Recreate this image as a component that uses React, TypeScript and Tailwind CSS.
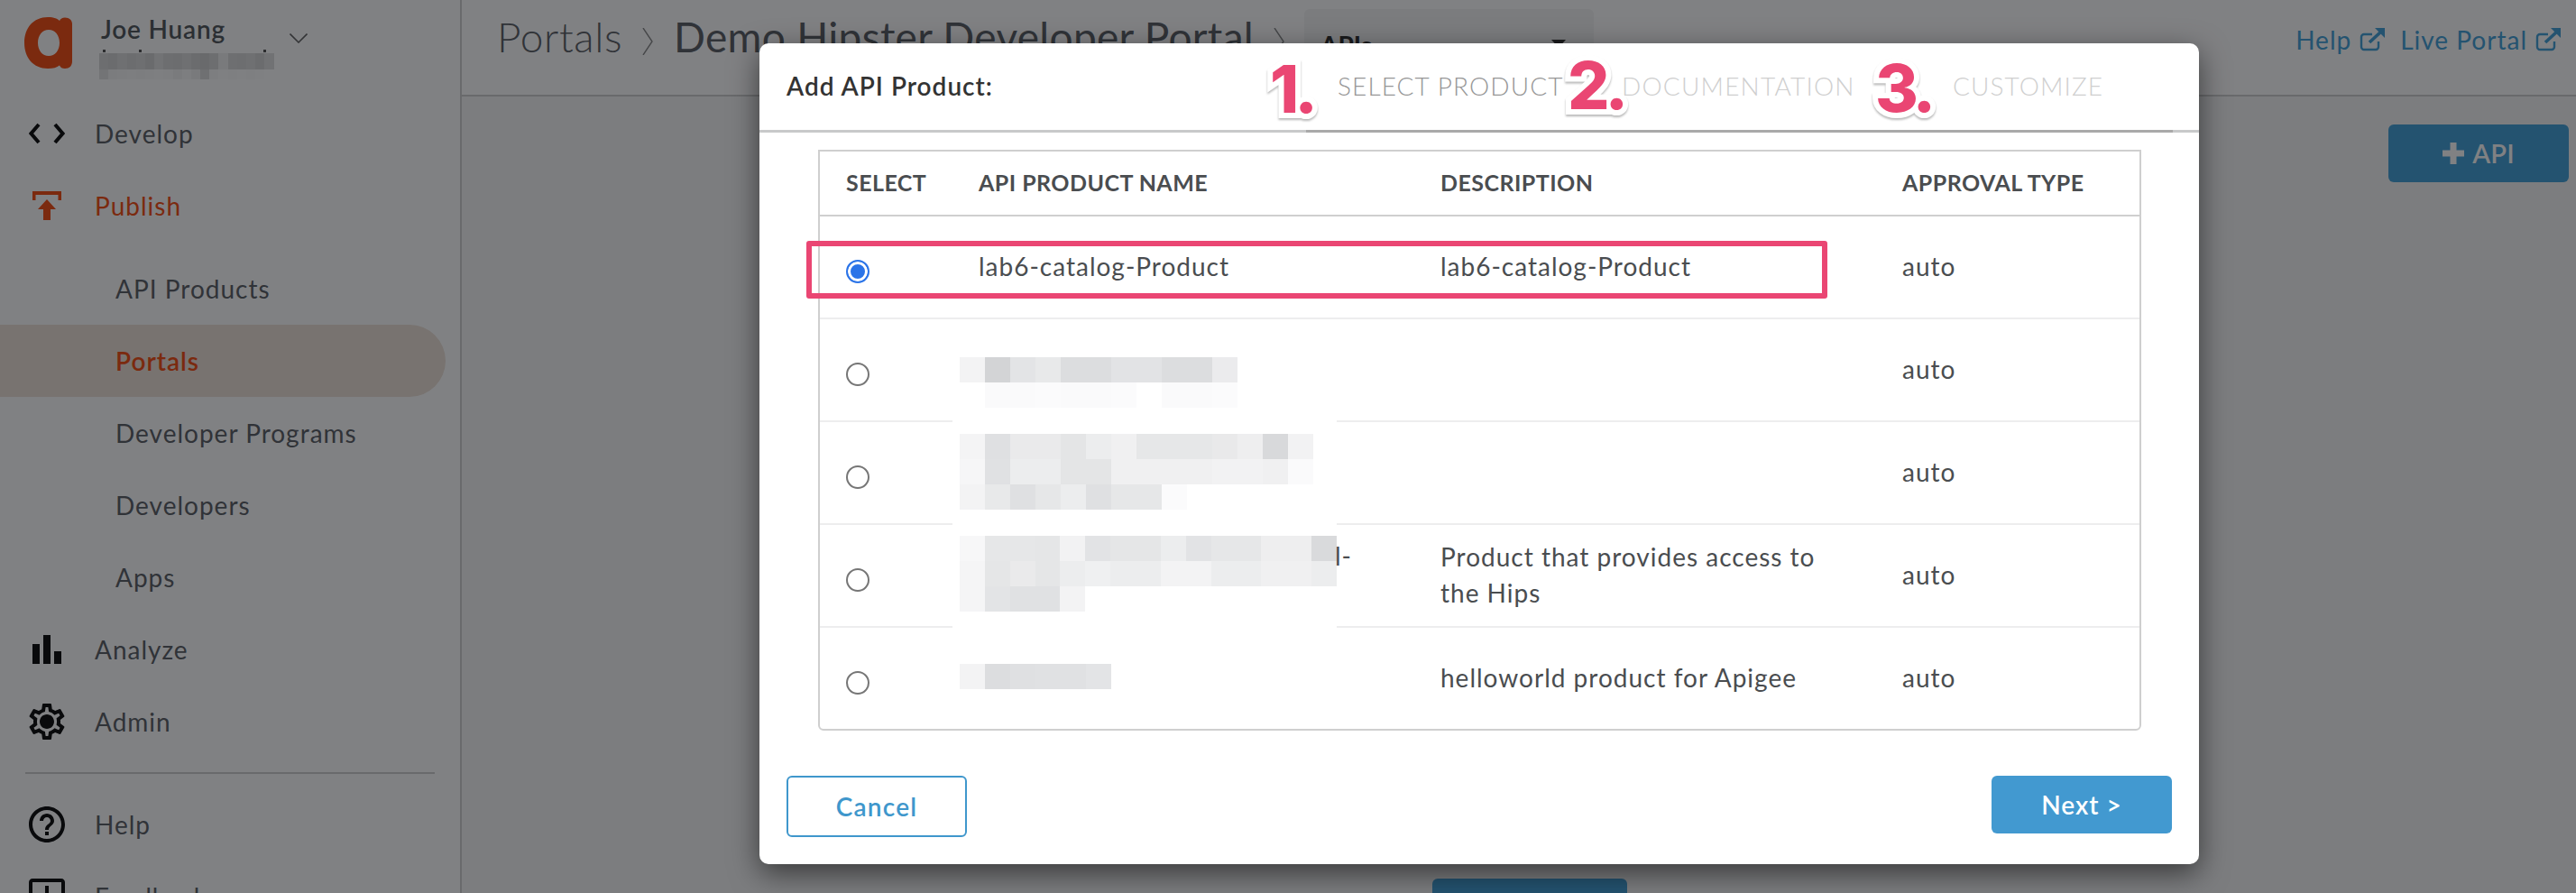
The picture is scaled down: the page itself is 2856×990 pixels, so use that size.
import React from "react";
import { MdBarChart, MdHelpOutline, MdOutlineFeedback } from "react-icons/md";

function Mosaic({ rows, cell = 28, h = 28 }: { rows: string[][]; cell?: number; h?: number }) {
  return (
    <div className="flex flex-col">
      {rows.map((r, i) => (
        <div key={i} className="flex">
          {r.map((c, j) => (
            <div key={j} style={{ width: cell, height: h, background: "#" + c }} />
          ))}
        </div>
      ))}
    </div>
  );
}

function Ext() {
  return (
    <svg viewBox="0 0 28 26" className="w-[28px] h-[26px]" fill="none">
      <path d="M21 15v6a3 3 0 0 1-3 3H5a3 3 0 0 1-3-3V10a3 3 0 0 1 3-3h9" stroke="#46a2d8" strokeWidth="2.4" />
      <path d="M11 16 L24 4" stroke="#46a2d8" strokeWidth="3.6" />
      <path d="M17 0 H28 V11 Z" fill="#46a2d8" />
    </svg>
  );
}

function Chev() {
  return (
    <svg viewBox="0 0 12 30" className="w-[12px] h-[30px]" fill="none">
      <path d="M1 0 L11 15 L1 30" stroke="#8a8a8a" strokeWidth="1.4" />
    </svg>
  );
}

const gear =
  "M19.43 12.98c.04-.32.07-.64.07-.98 0-.34-.03-.66-.07-.98l2.11-1.65c.19-.15.24-.42.12-.64l-2-3.46c-.09-.16-.26-.25-.44-.25-.06 0-.12.01-.17.03l-2.49 1c-.52-.4-1.08-.73-1.69-.98l-.38-2.65C14.46 2.18 14.25 2 14 2h-4c-.25 0-.46.18-.49.42l-.38 2.65c-.61.25-1.17.59-1.69.98l-2.49-1c-.06-.02-.12-.03-.18-.03-.17 0-.34.09-.43.25l-2 3.46c-.13.22-.07.49.12.64l2.11 1.65c-.04.32-.07.65-.07.98 0 .33.03.66.07.98l-2.11 1.65c-.19.15-.24.42-.12.64l2 3.46c.09.16.26.25.44.25.06 0 .12-.01.17-.03l2.49-1c.52.4 1.08.73 1.69.98l.38 2.65c.03.24.24.42.49.42h4c.25 0 .46-.18.49-.42l.38-2.65c.61-.25 1.17-.59 1.69-.98l2.49 1c.06.02.12.03.18.03.17 0 .34-.09.43-.25l2-3.46c.12-.22.07-.49-.12-.64l-2.11-1.65zm-1.98-1.71c.04.31.05.52.05.73 0 .21-.02.43-.05.73l-.14 1.13.89.7 1.08.84-.7 1.21-1.27-.51-1.04-.42-.9.68c-.43.32-.84.56-1.25.73l-1.06.43-.16 1.13-.2 1.35h-1.4l-.19-1.35-.16-1.13-1.06-.43c-.43-.18-.83-.41-1.23-.71l-.91-.7-1.06.43-1.27.51-.7-1.21 1.08-.84.89-.7-.14-1.13c-.03-.31-.05-.54-.05-.74s.02-.43.05-.73l.14-1.13-.89-.7-1.08-.84.7-1.21 1.27.51 1.04.42.9-.68c.43-.32.84-.56 1.25-.73l1.06-.43.16-1.13.2-1.35h1.39l.19 1.35.16 1.13 1.06.43c.43.18.83.41 1.23.71l.91.7 1.06-.43 1.27-.51.7 1.21-1.07.85-.89.7.14 1.13zM12 8c-2.21 0-4 1.79-4 4s1.79 4 4 4 4-1.79 4-4-1.79-4-4-4z";

function NavRow({ icon, label, red }: { icon: React.ReactNode; label: string; red?: boolean }) {
  return (
    <div className={"h-[80px] flex items-center pl-[28px] gap-[29px] shrink-0 " + (red ? "text-[#f45016]" : "text-[#5f6368]")}>
      <div className="w-[48px] h-[48px] flex items-center justify-center text-[#111]">{icon}</div>
      <span className="tracking-[1px]">{label}</span>
    </div>
  );
}

function SubRow({ label, active }: { label: string; active?: boolean }) {
  return (
    <div className={"h-[80px] flex items-center pl-[128px] shrink-0 tracking-[1px] " + (active ? "w-[494px] bg-[#eee2d8] rounded-r-[40px] text-[#f45016] font-semibold" : "text-[#5f6368]")}>
      {label}
    </div>
  );
}

function Sidebar() {
  const a = ["d8d8d8", "d4d4d4", "dcdcdc", "d6d6d6", "dadada", "d2d2d2", "e2e2e2", "d8d8d8", "d6d6d6", "dcdcdc", "d4d4d4", "d0d0d0", "d8d8d8", "f0f0f0", "dadada", "d8d8d8", "dcdcdc", "d4d4d4", "e0e0e0"];
  const b = ["e4e4e4", "f4f4f4", "f6f6f6", "f8f8f8", "f6f6f6", "f8f8f8", "fafafa", "f8f8f8", "f2f2f2", "f8f8f8", "f0f0f0", "dcdcdc", "f8f8f8", "fcfcfc", "fafafa", "fcfcfc", "fafafa", "fcfcfc", "fefefe"];
  return (
    <div className="w-[512px] h-[990px] shrink-0 bg-white border-r-2 border-[#d0d0d0] flex flex-col text-[28px] overflow-hidden">
      <div className="h-[108px] shrink-0 flex items-start pl-[27px] pt-[19px]">
        <svg viewBox="0 0 53 57" className="w-[53px] h-[57px] shrink-0">
          <path fillRule="evenodd" fill="#f45016" d="M26 0c7 0 11 2 13 4 1-2 3-3.500 6-3.500 5 0 8 3 8 7V49c0 5-3 8-8 8-3 0-5-1-6-3.500C36 56 32 57 26 57 10 57 0 45 0 28.500S10 0 26 0zM27 14c-7 0-12 6-12 14.500S20 43 27 43s12-6 12-14.500S34 14 27 14z" />
        </svg>
        <div className="ml-[32px] w-[200px] relative">
          <div className="text-[#555a5e] font-semibold tracking-[0.8px] leading-[34px] mt-[-4px] whitespace-nowrap">Joe Huang</div>
          <div className="absolute left-[-2px] top-[40px]">
            <Mosaic rows={[a]} cell={10.2} h={18} />
            <Mosaic rows={[b]} cell={10.2} h={11} />
          </div>
          <div className="absolute left-[2px] top-[36px] w-[3px] h-[3px] bg-[#555]" />
          <div className="absolute left-[42px] top-[36px] w-[3px] h-[3px] bg-[#555]" />
          <div className="absolute left-[180px] top-[36px] w-[3px] h-[3px] bg-[#555]" />
        </div>
        <svg viewBox="0 0 20 11" className="w-[20px] h-[11px] mt-[18px] ml-[9px] shrink-0" fill="none">
          <path d="M0.500 0.500 L10 10 L19.500 0.500" stroke="#666" strokeWidth="1.600" />
        </svg>
      </div>
      <NavRow
        label="Develop"
        icon={
          <svg viewBox="0 0 40 24" className="w-[40px] h-[24px]" fill="none">
            <path d="M11 2 L2.500 12 L11 22 M29 2 L37.500 12 L29 22" stroke="#111" strokeWidth="4" />
          </svg>
        }
      />
      <NavRow
        red
        label="Publish"
        icon={
          <svg viewBox="0 0 32 32" className="w-[32px] h-[32px]" fill="#f45016">
            <path d="M0 0 H32 V10 H28.500 V4 H3.500 V10 H0 Z" />
            <path d="M16 9 L26 20 H20 V32 H12 V20 H6 Z" />
          </svg>
        }
      />
      <div className="mt-[12px] flex flex-col">
        <SubRow label="API Products" />
        <SubRow label="Portals" active />
        <SubRow label="Developer Programs" />
        <SubRow label="Developers" />
        <SubRow label="Apps" />
      </div>
      <NavRow label="Analyze" icon={<MdBarChart size={48} />} />
      <NavRow
        label="Admin"
        icon={
          <svg viewBox="0 0 24 24" className="w-[50px] h-[50px]" fill="#111">
            <path fillRule="evenodd" d={gear} />
          </svg>
        }
      />
      <div className="mt-[16px] mb-[16px] ml-[28px] w-[454px] h-[2px] shrink-0 bg-[#d0d0d0]" />
      <NavRow label="Help" icon={<MdHelpOutline size={48} />} />
      <NavRow label="Feedback" icon={<MdOutlineFeedback size={48} />} />
    </div>
  );
}

function Main() {
  return (
    <div className="flex-1 h-[990px] bg-[#f6f6f6] flex flex-col overflow-hidden">
      <div className="h-[107px] shrink-0 bg-white border-b-2 border-[#d0d0d0] flex items-start pl-[39px] pr-[17px] whitespace-nowrap">
        <span className="text-[46px] leading-[56px] mt-[13px] font-light text-[#5f6368] tracking-[0.6px]">Portals</span>
        <span className="ml-[22px] mt-[31px]"><Chev /></span>
        <span className="ml-[23px] text-[46px] leading-[56px] mt-[13px] text-[#5f6368] tracking-[0.3px]">Demo Hipster Developer Portal</span>
        <span className="ml-[22px] mt-[31px]"><Chev /></span>
        <div className="ml-[22px] mt-[10px] w-[321px] h-[62px] rounded-[6px] bg-[#f4f4f4] flex items-start pl-[18px] pt-[23px] relative">
          <span className="text-[28px] leading-[34px] font-bold text-[#333]">APIs</span>
          <span className="absolute left-[274px] top-[34px] w-0 h-0 border-l-[8px] border-r-[8px] border-t-[9px] border-l-transparent border-r-transparent border-t-[#333]" />
        </div>
        <div className="ml-auto mt-[26px] flex items-center text-[28px] leading-[36px] tracking-[1px] text-[#46a2d8]">
          <span>Help</span>
          <span className="ml-[9px]"><Ext /></span>
          <span className="ml-[17px]">Live Portal</span>
          <span className="ml-[9px]"><Ext /></span>
        </div>
      </div>
      <div className="flex flex-col items-start">
        <button className="ml-[2136px] mt-[31px] w-[200px] h-[64px] rounded-[6px] bg-[#46a2d8] text-white text-[29px] font-semibold flex items-center justify-center gap-[9px] tracking-[0.2px]">
          <svg viewBox="0 0 24 24" className="w-[24px] h-[24px]" fill="#fff">
            <path d="M8.500 0 H15.500 V8.500 H24 V15.500 H15.500 V24 H8.500 V15.500 H0 V8.500 H8.500 Z" />
          </svg>
          API
        </button>
        <div className="ml-[1076px] mt-[772px] w-[216px] h-[64px] rounded-[6px] bg-[#46a2d8]" />
      </div>
    </div>
  );
}

const m2 = [
  ["f3f3f4", "d3d4d6", "e3e4e6", "e8e9ea", "dcdddf", "dcdddf", "e2e3e5", "e2e3e5", "dcdddf", "dcdddf", "ebebed"],
  ["ffffff", "fafafb", "fafafb", "fbfbfc", "fafafb", "fafafb", "fbfbfc", "ffffff", "fafafb", "fafafb", "fbfbfc"],
];
const m3 = [
  ["f4f4f5", "dfe0e2", "eaeaeb", "eaeaeb", "e4e5e6", "ecedee", "f0f0f1", "e6e7e8", "e6e7e8", "e6e7e8", "e9e9ea", "eeeeef", "d8d9db", "f2f2f3"],
  ["f6f6f7", "e0e1e3", "ecedee", "ecedee", "e4e5e6", "e4e5e6", "f0f0f1", "f0f0f1", "f0f0f1", "f0f0f1", "f2f2f3", "f2f2f3", "f0f0f1", "fafafb"],
  ["f3f3f4", "e8e9ea", "dfe0e2", "e6e7e8", "ecedee", "dfe0e2", "e6e7e8", "e6e7e8", "fbfbfc", "ffffff", "ffffff", "ffffff", "ffffff", "ffffff"],
];
const m4 = [
  ["f7f7f8", "e6e7e8", "e6e7e8", "e5e6e7", "f2f2f3", "e2e3e5", "e5e6e7", "e5e6e7", "ecedee", "e2e3e5", "e6e7e8", "e6e7e8", "eeeeef", "eeeeef", "d9dadc"],
  ["f5f5f6", "e5e6e7", "eaeaeb", "e5e6e7", "ecedee", "eff0f1", "ecedee", "ecedee", "f3f3f4", "f3f3f4", "ecedee", "ecedee", "f0f0f1", "f0f0f1", "ecedee"],
  ["f5f5f6", "e3e4e6", "e0e1e3", "e0e1e3", "f3f3f4", "ffffff", "ffffff", "ffffff", "ffffff", "ffffff", "ffffff", "ffffff", "ffffff", "ffffff", "ffffff"],
];
const m5 = [["f3f3f4", "dcdddf", "dfe0e2", "e0e1e3", "e0e1e3", "e3e4e6"]];

function Row({ desc, checked, last }: { desc: React.ReactNode; checked?: boolean; last?: boolean }) {
  return (
    <div className={"grid grid-cols-[176px_512px_512px_1fr] items-center " + (last ? "h-[112px]" : "h-[114px] border-b-2 border-[#ededee]")}>
      <div className="pl-[29px] flex">
        <input
          type="radio"
          readOnly
          checked={!!checked}
          className="appearance-none w-[26px] h-[26px] m-0 mt-[9px] rounded-full border-2 border-[#767676] checked:border-[#2b74e8] checked:bg-[#2b74e8] checked:shadow-[inset_0_0_0_3px_white]"
        />
      </div>
      <div className="pb-[2px]">{checked ? "lab6-catalog-Product" : ""}</div>
      <div className="pb-[2px] leading-[40px] w-[450px]">{desc}</div>
      <div className="pb-[2px]">auto</div>
    </div>
  );
}

function Sticker({ n, cls }: { n: string; cls: string }) {
  return (
    <span className={"absolute font-extrabold text-[73px] leading-none tracking-[-5px] text-[#ea4673] [font-family:Inter,sans-serif] [-webkit-text-stroke:12px_white] [paint-order:stroke_fill] [filter:drop-shadow(0_2px_1px_rgba(0,0,0,0.28))] " + cls}>
      {n}
    </span>
  );
}

function Modal() {
  return (
    <div className="w-[1596px] h-[910px] rounded-[10px] bg-white shadow-[0_10px_32px_rgba(0,0,0,0.55)] relative flex flex-col">
      <div className="h-[99px] shrink-0 border-b-[3px] border-[#c8c9ca] flex items-center pl-[30px] pb-[2px] relative text-[28px]">
        <span className="w-[611px] font-semibold text-[#333] tracking-[1px]">Add API Product:</span>
        <span className="w-[315px] text-[#979797] font-light tracking-[1.1px]">SELECT PRODUCT</span>
        <span className="w-[367px] text-[#cfcfcf] font-light tracking-[1.2px]">DOCUMENTATION</span>
        <span className="text-[#cfcfcf] font-light tracking-[1.1px]">CUSTOMIZE</span>
        <div className="absolute left-[606px] top-[96px] w-[961px] h-[3px] bg-[#a9a9a9]" />
      </div>
      <Sticker n="1." cls="left-[566px] top-[14px]" />
      <Sticker n="2." cls="left-[896px] top-[10px]" />
      <Sticker n="3." cls="left-[1237px] top-[13px]" />

      <div className="mt-[19px] ml-[65px] w-[1467px] h-[644px] border-2 border-[#cfcfcf] rounded-b-[6px] relative text-[28px] text-[#4a4d50] tracking-[1px] shrink-0">
        <div className="h-[72px] border-b-2 border-[#cfcfcf] grid grid-cols-[176px_512px_512px_1fr] items-center text-[25px] font-bold text-[#4a4d50] tracking-[0.45px]">
          <div className="pl-[29px]">SELECT</div>
          <div>API PRODUCT NAME</div>
          <div>DESCRIPTION</div>
          <div>APPROVAL TYPE</div>
        </div>
        <Row checked desc="lab6-catalog-Product" />
        <Row desc="" />
        <Row desc="" />
        <Row desc="Product that provides access to the Hips" />
        <Row last desc="helloworld product for Apigee" />

        <div className="absolute left-[147px] top-[202px] w-[426px] h-[400px] bg-white pl-[8px] flex flex-col">
          <div className="mt-[26px]"><Mosaic rows={m2} /></div>
          <div className="mt-[29px]"><Mosaic rows={m3} /></div>
          <div className="mt-[29px]"><Mosaic rows={m4} /></div>
          <div className="mt-[58px]"><Mosaic rows={m5} /></div>
          <span className="absolute left-[424px] top-[226px] leading-[40px]">l-</span>
        </div>
      </div>

      <div className="mt-[50px] px-[30px] flex justify-between items-start">
        <button className="w-[200px] h-[68px] rounded-[6px] border-2 border-[#3f97cc] text-[#3f97cc] text-[28px] font-semibold tracking-[1.2px] bg-white">Cancel</button>
        <button className="w-[200px] h-[64px] rounded-[6px] bg-[#4299d0] text-white text-[28px] font-semibold tracking-[1px]">Next &gt;</button>
      </div>

      <div className="absolute left-[52px] top-[219px] w-[1132px] h-[64px] border-[6px] border-[#ea4673] rounded-[3px]" />
    </div>
  );
}

export default function App() {
  return (
    <div className="relative w-[2856px] h-[990px] overflow-hidden flex [font-family:Lato,sans-serif]">
      <Sidebar />
      <Main />
      <div className="absolute inset-0 bg-[rgba(2,4,8,0.5)] pl-[842px] pt-[48px]">
        <Modal />
      </div>
    </div>
  );
}
